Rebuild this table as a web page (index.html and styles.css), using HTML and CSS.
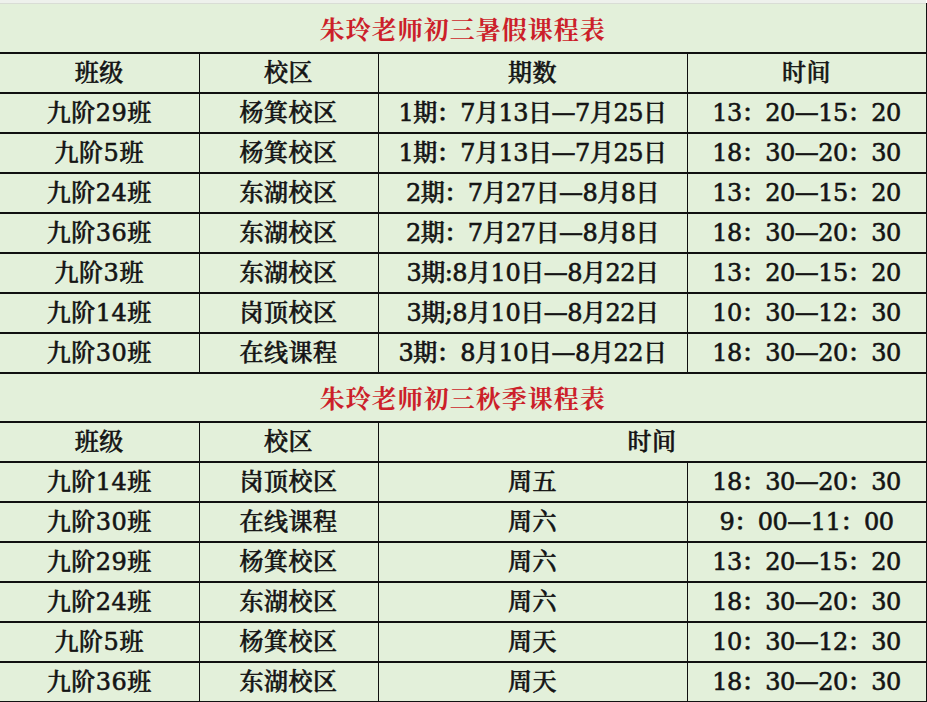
FILE: index.html
```html
<!DOCTYPE html>
<html lang="zh-CN">
<head>
<meta charset="utf-8">
<title>朱玲老师初三课程表</title>
<link rel="stylesheet" href="styles.css">
</head>
<body>
<div class="strip"></div>
<table class="sched">
  <colgroup>
    <col class="c1"><col class="c2"><col class="c3"><col class="c4">
  </colgroup>
  <tbody>
    <tr class="title-row first"><td colspan="4" class="title">朱玲老师初三暑假课程表</td></tr>
    <tr><td>班级</td><td>校区</td><td>期数</td><td>时间</td></tr>
    <tr><td>九阶29班</td><td>杨箕校区</td><td class="p">1期：7月13日—7月25日</td><td class="t">13：20—15：20</td></tr>
    <tr><td>九阶5班</td><td>杨箕校区</td><td class="p">1期：7月13日—7月25日</td><td class="t">18：30—20：30</td></tr>
    <tr><td>九阶24班</td><td>东湖校区</td><td class="p">2期：7月27日—8月8日</td><td class="t">13：20—15：20</td></tr>
    <tr><td>九阶36班</td><td>东湖校区</td><td class="p">2期：7月27日—8月8日</td><td class="t">18：30—20：30</td></tr>
    <tr><td>九阶3班</td><td>东湖校区</td><td class="p">3期:8月10日—8月22日</td><td class="t">13：20—15：20</td></tr>
    <tr><td>九阶14班</td><td>岗顶校区</td><td class="p">3期;8月10日—8月22日</td><td class="t">10：30—12：30</td></tr>
    <tr><td>九阶30班</td><td>在线课程</td><td class="p">3期：8月10日—8月22日</td><td class="t">18：30—20：30</td></tr>
    <tr class="title-row second"><td colspan="4" class="title">朱玲老师初三秋季课程表</td></tr>
    <tr><td>班级</td><td>校区</td><td colspan="2">时间</td></tr>
    <tr><td>九阶14班</td><td>岗顶校区</td><td>周五</td><td class="t">18：30—20：30</td></tr>
    <tr><td>九阶30班</td><td>在线课程</td><td>周六</td><td class="t">9：00—11：00</td></tr>
    <tr><td>九阶29班</td><td>杨箕校区</td><td>周六</td><td class="t">13：20—15：20</td></tr>
    <tr><td>九阶24班</td><td>东湖校区</td><td>周六</td><td class="t">18：30—20：30</td></tr>
    <tr><td>九阶5班</td><td>杨箕校区</td><td>周天</td><td class="t">10：30—12：30</td></tr>
    <tr><td>九阶36班</td><td>东湖校区</td><td>周天</td><td class="t">18：30—20：30</td></tr>
  </tbody>
</table>
</body>
</html>
```

FILE: styles.css
```css
html, body {
  margin: 0;
  padding: 0;
  background: #ffffff;
}

.strip {
  height: 3px;
  width: 926px;
  background: #eef1ec;
}

.sched {
  width: 926px;
  border-collapse: collapse;
  table-layout: fixed;
  background: #e3f0da;
  font-family: "DejaVu Serif", "Noto Serif CJK SC", "Noto Sans CJK SC", serif;
  font-size: 24px;
  font-weight: 500;
  color: #141414;
  -webkit-text-stroke: 0.6px #141414;
  letter-spacing: 0.5px;
}

.c1 { width: 199px; }
.c2 { width: 179px; }
.c3 { width: 309px; }
.c4 { width: 239px; }

.sched td {
  height: 38px;
  padding: 0;
  text-align: center;
  vertical-align: middle;
  white-space: nowrap;
  border-top: 2px solid #111;
  border-bottom: 2px solid #111;
  border-left: 1px solid #111;
  border-right: 1px solid #111;
  line-height: 1;
}

.sched tr td:first-child {
  border-left: none;
}

.sched tr:first-child td {
  border-top: 1px solid #d9ddd5;
}

.title-row td.title {
  color: #cc1f2a;
  -webkit-text-stroke: 0;
  font-family: "Noto Serif CJK SC", "Noto Sans CJK SC", serif;
  font-size: 25px;
  font-weight: 700;
  letter-spacing: 1px;
}

.title-row.first td.title {
  height: 48px;
}

.title-row.second td.title {
  height: 47px;
}

.sched td.p,
.sched td.t {
  letter-spacing: -0.5px;
}
```
